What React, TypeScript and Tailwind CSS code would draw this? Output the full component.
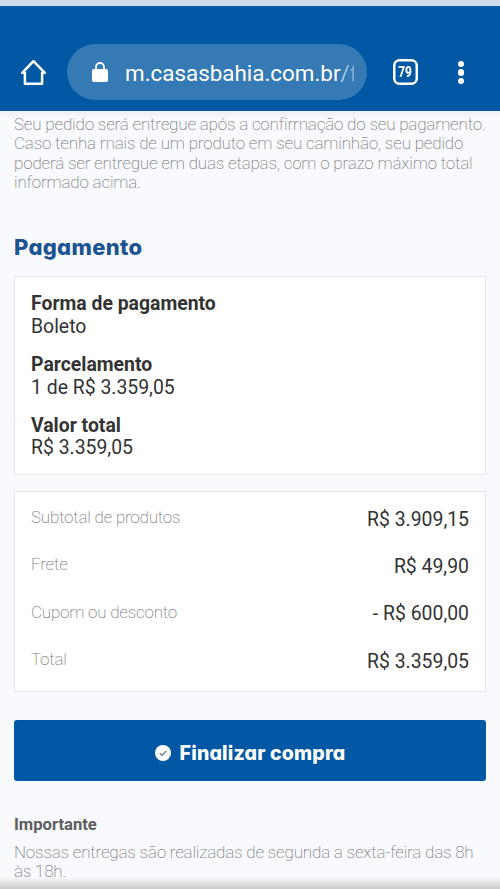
const payment = [
  { label: "Forma de pagamento", value: "Boleto" },
  { label: "Parcelamento", value: "1 de R$ 3.359,05" },
  { label: "Valor total", value: "R$ 3.359,05" },
];

const summary = [
  { label: "Subtotal de produtos", value: "R$ 3.909,15" },
  { label: "Frete", value: "R$ 49,90" },
  { label: "Cupom ou desconto", value: "- R$ 600,00" },
  { label: "Total", value: "R$ 3.359,05" },
];

function BrowserBar() {
  return (
    <header className="flex h-[105px] shrink-0 items-start bg-[#0057a3] pt-[38px] text-white">
      <svg className="ml-5 mt-[14.5px] h-[27px] w-[27px] shrink-0" viewBox="0 0 27 27" fill="none" stroke="currentColor" strokeWidth="2.5" strokeLinejoin="round" strokeLinecap="round">
        <path d="M2.2 13.8L13.5 2.2L24.8 13.8H22.1V24.8H4.9V13.8Z" />
      </svg>
      <div className="ml-[20px] flex h-14 w-[300px] shrink-0 items-center rounded-full bg-[#357ab5] pl-[25px]">
        <svg className="h-[21px] w-4 shrink-0" viewBox="0 0 16 21" fill="none">
          <path d="M4 8V5a4 4 0 0 1 8 0v3" stroke="currentColor" strokeWidth="1.8" />
          <rect y="7" width="16" height="13" rx="1.8" fill="currentColor" />
        </svg>
        <div className="ml-[17px] w-[229px] overflow-hidden whitespace-nowrap pt-[2px] text-[22.4px] leading-8">
          m.casasbahia.com.br<span className="bg-gradient-to-r from-[#b9d7ed] to-[#6c9fca] bg-clip-text text-transparent">/f</span>
        </div>
      </div>
      <div className="ml-[26px] mt-[15px] flex h-[26px] w-[25px] shrink-0 items-center justify-center rounded-[6.5px] text-[14px] font-extrabold leading-none ring-[2.5px] ring-inset ring-white"><span className="scale-x-[0.85]">79</span></div>
      <div className="ml-[40px] mt-[17px] flex flex-col gap-[2.3px]">
        <i className="size-[6.2px] rounded-full bg-white" />
        <i className="size-[6.2px] rounded-full bg-white" />
        <i className="size-[6.2px] rounded-full bg-white" />
      </div>
    </header>
  );
}

export default function App() {
  return (
    <div className="flex h-[889px] w-[500px] flex-col overflow-hidden bg-[#f8fafd] font-[Roboto,sans-serif] text-[#333]">
      <div className="h-[6px] shrink-0 bg-[#d0dde8]" />
      <BrowserBar />
      <main className="relative flex-1 bg-gradient-to-b from-[#eceef1] to-[#f8fafd] to-[8px] px-3.5 pt-[4px]">
        <p className="whitespace-nowrap text-[17px] font-extralight leading-[19.4px] tracking-[-0.2px] text-[#808080]">
          Seu pedido será entregue após a confirmação do seu pagamento.<br />
          Caso tenha mais de um produto em seu caminhão, seu pedido<br />
          poderá ser entregue em duas etapas, com o prazo máximo total<br />
          informado acima.
        </p>
        <h2 className="mt-[40px] h-[28px] font-[Inter,sans-serif] text-[22px] font-extrabold leading-7 tracking-[0.3px] text-[#1c5390] [font-feature-settings:'cv11']">Pagamento</h2>
        <section className="mt-[15px] flex h-[199.5px] flex-col gap-[15px] border border-[#e2e7eb] bg-white px-4 pt-[16.8px] text-[19.4px] leading-[22.8px]">
          {payment.map((item) => (
            <div key={item.label}>
              <div className="font-bold">{item.label}</div>
              <div>{item.value}</div>
            </div>
          ))}
        </section>
        <section className="mt-[16px] h-[201px] border border-[#e2e7eb] bg-white px-4 pt-[3.5px]">
          {summary.map((item) => (
            <div key={item.label} className="flex h-[47.3px] items-center justify-between">
              <span className="pb-[3px] text-[17px] font-extralight tracking-[-0.23px] text-[#808080]">{item.label}</span>
              <span className="text-[19.4px]">{item.value}</span>
            </div>
          ))}
        </section>
        <button className="mt-[28.2px] flex h-[61px] w-full items-center justify-center gap-[9px] rounded-[3px] bg-[#0057a3] pt-[5px] text-white">
          <svg className="size-4" viewBox="0 0 16 16" fill="none">
            <circle cx="8" cy="8" r="8" fill="white" />
            <path d="M4.8 8.2L7 10.3L11.4 5.9" stroke="#60758a" strokeWidth="1.2" />
          </svg>
          <span className="pt-px font-[Inter,sans-serif] text-[19.5px] font-extrabold tracking-[0.18px] [font-feature-settings:'cv11']">Finalizar compra</span>
        </button>
        <h3 className="mt-[32.5px] text-[16.6px] font-bold leading-[22px] text-[#5d5d5f]">Importante</h3>
        <p className="mt-[7px] whitespace-nowrap text-[17px] font-extralight leading-[19.4px] tracking-[-0.2px] text-[#808080]">
          Nossas entregas são realizadas de segunda a sexta-feira das 8h<br />às 18h.
        </p>
        <div className="absolute inset-x-0 bottom-0 h-3 bg-gradient-to-b from-transparent to-[#c9cacc]" />
      </main>
    </div>
  );
}
